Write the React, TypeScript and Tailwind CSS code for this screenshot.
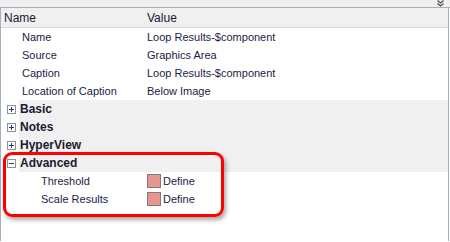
import React from "react";

const font = { fontFamily: '"Liberation Sans", Arial, sans-serif' };

function PropRow({ name, value, indent = 22 }: { name: string; value: React.ReactNode; indent?: number }) {
  return (
    <div className="flex h-[18px] items-center bg-white text-[11px] text-[#1c1c44]">
      <div className="w-[146px] shrink-0" style={{ paddingLeft: indent - 1 }}>
        {name}
      </div>
      <div className="flex items-center">{value}</div>
    </div>
  );
}

function Category({ label, open = false }: { label: string; open?: boolean }) {
  return (
    <div className="flex h-[18px] items-center bg-white">
      <div className="flex w-[18px] shrink-0 items-center justify-center pl-[2px]">
        <div className="flex h-[9px] w-[9px] items-center justify-center border border-[#919191] bg-white">
          <svg width="7" height="7" viewBox="0 0 7 7">
            <rect x="1" y="3" width="5" height="1" fill="#1f3a87" />
            {!open && <rect x="3" y="1" width="1" height="5" fill="#1f3a87" />}
          </svg>
        </div>
      </div>
      <div className="flex h-full flex-1 items-center bg-[#f0f0f0] pl-[1px] text-[12px] font-bold text-[#1a1a30]">
        {label}
      </div>
    </div>
  );
}

function Define() {
  return (
    <div className="flex items-center">
      <div className="h-[14px] w-[14px] border border-[#7c7c7c] bg-[#e6958f]" />
      <span className="ml-[2px]">Define</span>
    </div>
  );
}

export default function App() {
  return (
    <div className="relative h-[242px] w-[450px] overflow-hidden bg-white" style={font}>
      <div className="relative h-[8px] border-b border-[#a3b0bd] bg-[#f0f0f0]">
        <svg className="absolute left-[437px] top-[0px]" width="7" height="7" viewBox="0 0 7 7">
          <path d="M0.5 0.5 L3.5 3 L6.5 0.5" stroke="#505050" strokeWidth="1.3" fill="none" />
          <path d="M0.5 3.5 L3.5 6 L6.5 3.5" stroke="#505050" strokeWidth="1.3" fill="none" />
        </svg>
      </div>
      <div className="flex h-[233px] w-[449px] flex-col border-l border-r border-[#a3b0bd]">
        <div className="flex h-[20px] items-center border-b border-[#d6dbe0] bg-[#f0f0f0] text-[12px] text-[#1a1a30]">
          <div className="w-[146px] shrink-0 pl-[3px]">Name</div>
          <div>Value</div>
        </div>
        <PropRow name="Name" value="Loop Results-$component" />
        <PropRow name="Source" value="Graphics Area" />
        <PropRow name="Caption" value="Loop Results-$component" />
        <PropRow name="Location of Caption" value="Below Image" />
        <Category label="Basic" />
        <Category label="Notes" />
        <Category label="HyperView" />
        <Category label="Advanced" open />
        <PropRow name="Threshold" value={<Define />} indent={41} />
        <PropRow name="Scale Results" value={<Define />} indent={41} />
        <div className="flex-1 bg-white" />
      </div>
      <div className="pointer-events-none absolute left-[3px] top-[152px] h-[65px] w-[221px] rounded-[9px] border-[3px] border-[#ff0000] shadow-[2px_3px_4px_rgba(0,0,0,0.35)]" />
    </div>
  );
}
